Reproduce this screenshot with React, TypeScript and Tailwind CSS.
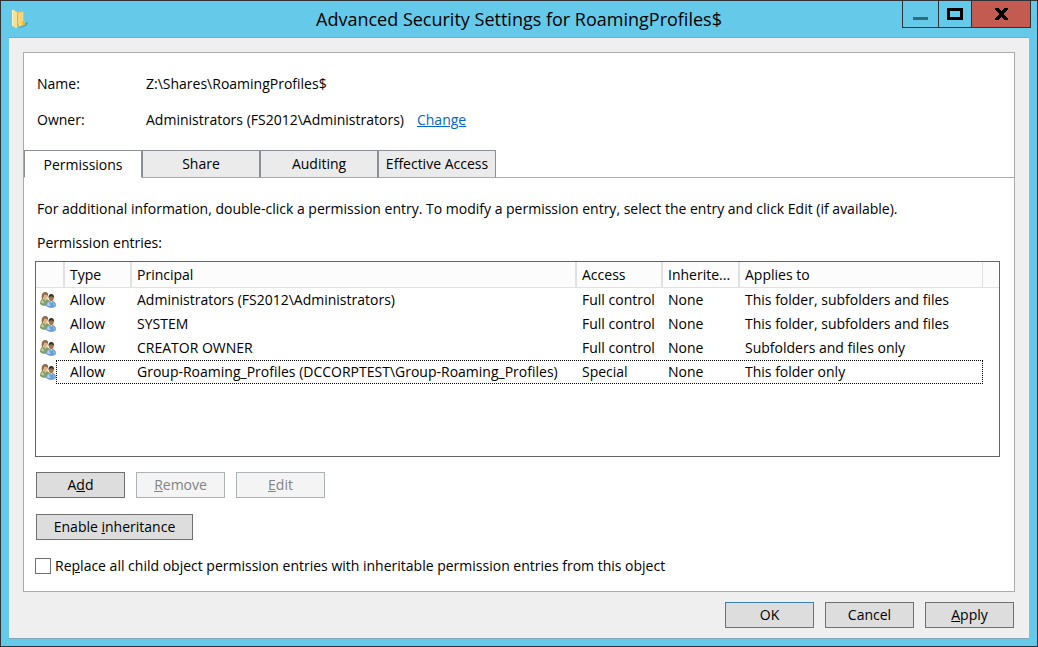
import React, { useState } from 'react';

interface PermissionEntry {
  principal: string;
  access: string;
  inherited: string;
  appliesTo: string;
}

const ENTRIES: PermissionEntry[] = [
  {
    principal: 'Administrators (FS2012\\Administrators)',
    access: 'Full control',
    inherited: 'None',
    appliesTo: 'This folder, subfolders and files',
  },
  { principal: 'SYSTEM', access: 'Full control', inherited: 'None', appliesTo: 'This folder, subfolders and files' },
  { principal: 'CREATOR OWNER', access: 'Full control', inherited: 'None', appliesTo: 'Subfolders and files only' },
  {
    principal: 'Group-Roaming_Profiles (DCCORPTEST\\Group-Roaming_Profiles)',
    access: 'Special',
    inherited: 'None',
    appliesTo: 'This folder only',
  },
];

const TABS = ['Permissions', 'Share', 'Auditing', 'Effective Access'];

function FolderIcon() {
  return (
    <svg width="18" height="20" viewBox="0 0 18 20" aria-hidden="true">
      <path d="M8 18l8-5 1 1-2 3-6 2z" fill="#3c93b5" opacity=".7" />
      <path d="M6 3l6-1 1 1v12l-6 2z" fill="#e3bd55" />
      <path d="M7 4l5-1v11l-5 2z" fill="#f0d680" />
      <path d="M7 15l5-3h2v4l-6 2z" fill="#e2bb4c" />
      <path d="M8 15l3-2v3l-3 1z" fill="#f6e19a" />
      <path d="M1 1h2l4 3v14l-2 1-4-2z" fill="#f5e095" />
      <path d="M1 1h1v15l-1 1z" fill="#fff3bd" />
      <path d="M6 4l1 0v14l-1 .5z" fill="#d9b04a" />
    </svg>
  );
}

function GroupIcon() {
  return (
    <svg width="16" height="16" viewBox="0 0 16 16" aria-hidden="true">
      <path d="M0 12c0-3 1-5 3-5h4c2 1 3 2 3 4v2c-4 1.500-8 1-10-1z" fill="#7f9d62" />
      <path d="M1 11c0-2 1-3 2-3.500l1.500 4z" fill="#b5cc95" />
      <path d="M4 7l1.500 2L7 7z" fill="#dcc29e" />
      <ellipse cx="5.500" cy="4.200" rx="2.300" ry="3" fill="#dfb388" />
      <path d="M2 7C1 3 2.500 0 5 0s3.500 1.500 3 4C7 3.200 6 2.200 4.500 2.500 3.500 4 3.500 6 3 7.500z" fill="#8f6a48" />
      <path d="M6 14c0-3 1-4.500 3-5h4c2 .5 3 2.500 3 5-2 2.500-7 2.500-10 0z" fill="#6c9fd2" />
      <path d="M7 13.500c0-2 1-3.300 2-3.800l1.500 4.500z" fill="#aed0f0" />
      <path d="M13 10l2 3-1.500 1.500z" fill="#91bce6" />
      <path d="M10 9l1.200 1.800L12.500 9z" fill="#dcebf8" />
      <ellipse cx="11.300" cy="6.300" rx="2.300" ry="3" fill="#a5734a" />
      <path d="M8.600 6.500C8.200 3.500 9.300 2 11.300 2s3.200 1.500 2.700 4.500C13.300 5 12.500 4.300 11.500 4.300S9.300 5 8.600 6.500z" fill="#3c3027" />
    </svg>
  );
}

interface DialogButtonProps {
  children: React.ReactNode;
  primary?: boolean;
  disabled?: boolean;
  wide?: boolean;
}

function DialogButton({ children, primary, disabled, wide }: DialogButtonProps) {
  const tone = disabled
    ? 'border-[#adb2b5] bg-[#f4f4f4] text-[#838383]'
    : primary
      ? 'border-[#3c7fb1] bg-[#dddddd]'
      : 'border-[#707070] bg-[#dddddd]';
  return (
    <button
      type="button"
      disabled={disabled}
      className={`flex h-[26px] items-center justify-center border whitespace-nowrap ${wide ? 'w-[157px]' : 'w-[89px]'} ${tone}`}
    >
      <span>{children}</span>
    </button>
  );
}

function TitleBar() {
  return (
    <header className="grid h-9 grid-cols-[129px_1fr_129px] items-start">
      <div className="pt-2 pl-[10px]">
        <FolderIcon />
      </div>
      <h1 className="self-center text-center text-lg leading-6 whitespace-nowrap">
        Advanced Security Settings for RoamingProfiles$
      </h1>
      <div className="mr-[6px] flex h-[27px] justify-self-end border-r border-b border-[#2f3336]">
        <button type="button" aria-label="Minimize" className="flex w-9 items-end justify-center border-l border-[#2f3336] pb-[7px]">
          <span className="h-[3px] w-[15px] bg-[#31697f]" />
        </button>
        <button type="button" aria-label="Maximize" className="flex w-[33px] items-center justify-center border-l border-[#2f3336]">
          <span className="h-3 w-4 border-3 border-black" />
        </button>
        <button
          type="button"
          aria-label="Close"
          className="flex w-[59px] items-center justify-center border-l border-[#2f3336] bg-[#c35b50]"
        >
          <svg width="13" height="12" viewBox="0 0 13 12" shapeRendering="crispEdges">
            <path d="M0 0h4l2.500 3.500L9 0h4v1L8.500 6l4.500 5v1H9L6.500 8.500 4 12H0v-1l4.500-5L0 1z" fill="#000" />
          </svg>
        </button>
      </div>
    </header>
  );
}

function EntriesTable() {
  const [selected, setSelected] = useState(3);
  const head = 'border-r-2 border-b border-[#e1e1e1] bg-[#fcfcfc] pl-[5px] text-left font-normal';

  return (
    <div className="mt-2 mr-[14px] ml-[11px] h-[196px] overflow-auto border border-[#646464]">
      <table aria-label="Permission entries" className="w-full table-fixed border-separate border-spacing-0 whitespace-nowrap">
        <colgroup>
          <col className="w-[29px]" />
          <col className="w-[67px]" />
          <col className="w-[445px]" />
          <col className="w-[86px]" />
          <col className="w-[77px]" />
          <col />
          <col className="w-4" />
        </colgroup>
        <thead>
          <tr className="h-[26px]">
            <th aria-label="Kind" className={head}></th>
            <th className={head}>Type</th>
            <th className={head}>Principal</th>
            <th className={head}>Access</th>
            <th className={head}>Inherite...</th>
            <th className="border-r border-b border-[#e1e1e1] bg-[#fcfcfc] pl-[5px] text-left font-normal">Applies to</th>
            <th aria-label="Filler" className="border-b border-[#e1e1e1] bg-[#fcfcfc]"></th>
          </tr>
        </thead>
        <tbody>
          {ENTRIES.map((entry, i) => (
            <tr key={entry.principal} className="relative h-6" onClick={() => setSelected(i)}>
              <td className="pl-1">
                <GroupIcon />
                {/* dotted focus frame starts after the icon */}
                {selected === i && (
                  <span className="pointer-events-none absolute inset-y-0 right-4 left-5 border border-dotted border-black" />
                )}
              </td>
              <td className="pl-[5px]">Allow</td>
              <td className="pl-[5px]">{entry.principal}</td>
              <td className="pl-[5px]">{entry.access}</td>
              <td className="pl-[5px]">{entry.inherited}</td>
              <td className="pl-[5px]">{entry.appliesTo}</td>
              <td></td>
            </tr>
          ))}
        </tbody>
      </table>
    </div>
  );
}

export default function App() {
  const [tab, setTab] = useState(TABS[0]);

  return (
    <div className="flex min-h-screen flex-col border border-[#2f3336] bg-[#65c9ea] font-['Open_Sans','Noto_Sans',sans-serif] text-sm leading-5 text-black">
      <TitleBar />
      <div className="mx-2 mb-[7px] flex grow flex-col border-y border-[#7fa9bb] bg-[#efefef] px-[14px] pt-[14px] pb-[10px]">
        <main className="flex grow flex-col border border-[#acacac] bg-white">
          <dl className="grid grid-cols-[109px_1fr] gap-y-4 pt-[21px] pl-[13px]">
            <dt>Name:</dt>
            <dd>Z:\Shares\RoamingProfiles$</dd>
            <dt>Owner:</dt>
            <dd className="flex gap-[13px]">
              Administrators (FS2012\Administrators)
              <a href="#change" className="text-[#0066cc] underline">
                Change
              </a>
            </dd>
          </dl>

          <div role="tablist" className="mt-5 flex h-7">
            {TABS.map((name) => (
              <button
                key={name}
                type="button"
                role="tab"
                aria-selected={tab === name}
                onClick={() => setTab(name)}
                className={`w-[118px] border border-[#8c8e98] whitespace-nowrap ${
                  tab === name ? 'border-b-white bg-white pt-px' : 'border-b-[#acacac] bg-[#ebebeb]'
                }`}
              >
                {name}
              </button>
            ))}
            <div className="grow border-b border-[#acacac]" />
          </div>

          <p className="mt-[21px] pl-[13px]">
            For additional information, double-click a permission entry. To modify a permission entry, select the entry and
            click Edit (if available).
          </p>
          <p className="mt-[14px] pl-[13px]">Permission entries:</p>
          <EntriesTable />

          <div className="mt-[15px] ml-3 flex gap-[11px]">
            <DialogButton>
              A<u>d</u>d
            </DialogButton>
            <DialogButton disabled>
              <u>R</u>emove
            </DialogButton>
            <DialogButton disabled>
              <u>E</u>dit
            </DialogButton>
          </div>
          <div className="mt-4 ml-3 flex">
            <DialogButton wide>
              Enable <u>i</u>nheritance
            </DialogButton>
          </div>
          <label className="mt-4 mb-[14px] ml-[11px] flex items-center gap-1">
            <input type="checkbox" className="size-4 appearance-none border border-[#707070] bg-white checked:bg-[#707070]" />
            <span>
              Re<u>p</u>lace all child object permission entries with inheritable permission entries from this object
            </span>
          </label>
        </main>

        <footer className="mt-[10px] flex justify-end gap-[11px] pr-px">
          <DialogButton primary>OK</DialogButton>
          <DialogButton>Cancel</DialogButton>
          <DialogButton>
            <u>A</u>pply
          </DialogButton>
        </footer>
      </div>
    </div>
  );
}
